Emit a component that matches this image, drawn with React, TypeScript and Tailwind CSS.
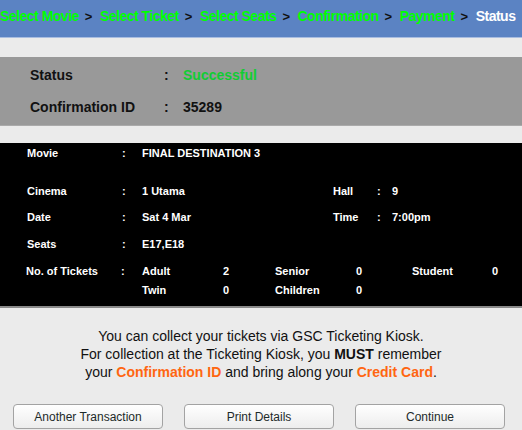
const steps = ['Select Movie', 'Select Ticket', 'Select Seats', 'Confirmation', 'Payment']

function Row({ label, value, extra }: { label: string; value: React.ReactNode; extra?: [string, string] }) {
  return (
    <div className="flex leading-[14px]">
      <span className="w-[95px] pl-[27px] box-content">{label}</span>
      <span className="w-[20px]">:</span>
      <span className="w-[191px]">{value}</span>
      {extra && (
        <>
          <span className="w-[44px]">{extra[0]}</span>
          <span className="w-[15px]">:</span>
          <span>{extra[1]}</span>
        </>
      )}
    </div>
  )
}

export default function App() {
  return (
    <div className="w-[522px] h-[430px] overflow-hidden bg-[#ebebeb] font-['Liberation_Sans',Arial,sans-serif]">
      <div className="h-[38px] bg-[#5b83c3] border-b border-[#a9bde0] flex items-start pt-[6px] text-[14px] font-bold tracking-[-0.5px] whitespace-nowrap">
        {steps.map((s) => (
          <span key={s} className="flex items-center">
            <span className="text-[#00ff00]">{s}</span>
            <span className="text-[#111] ml-[6px] mr-[8px] text-[13px]">&gt;</span>
          </span>
        ))}
        <span className="text-white">Status</span>
      </div>

      <div className="mt-[19px] bg-[#999999] border-b border-[#aaaaaa] pt-[10px] pb-[10px] text-[14px] font-bold leading-[16px] text-[#111]">
        <div className="flex">
          <span className="w-[134px] pl-[30px] box-content">Status</span>
          <span className="w-[19px]">:</span>
          <span className="text-[#11cc33]">Successful</span>
        </div>
        <div className="flex mt-[16px]">
          <span className="w-[134px] pl-[30px] box-content">Confirmation ID</span>
          <span className="w-[19px]">:</span>
          <span>35289</span>
        </div>
      </div>

      <div className="mt-[17px] bg-black border-b-2 border-[#8a8a8a] text-white text-[11px] font-bold pt-[3px] pb-[9px]">
        <Row label="Movie" value="FINAL DESTINATION 3" />
        <div className="mt-[24px]">
          <Row label="Cinema" value="1 Utama" extra={['Hall', '9']} />
        </div>
        <div className="mt-[12px]">
          <Row label="Date" value="Sat 4 Mar" extra={['Time', '7:00pm']} />
        </div>
        <div className="mt-[13px]">
          <Row label="Seats" value="E17,E18" />
        </div>
        <div className="mt-[13px] flex leading-[14px]">
          <span className="w-[95px] pl-[26px] box-content">No. of Tickets</span>
          <span className="w-[21px]">:</span>
          <div className="grid grid-cols-[81px_52px_81px_56px_80px_auto] gap-y-[5px]">
            <span>Adult</span>
            <span>2</span>
            <span>Senior</span>
            <span>0</span>
            <span>Student</span>
            <span>0</span>
            <span>Twin</span>
            <span>0</span>
            <span>Children</span>
            <span>0</span>
          </div>
        </div>
      </div>

      <div className="mt-[19px] text-center text-[14px] leading-[18px] text-[#111]">
        <p>You can collect your tickets via GSC Ticketing Kiosk.</p>
        <p>
          For collection at the Ticketing Kiosk, you <b>MUST</b> remember
        </p>
        <p>
          your <b className="text-[#ff6611]">Confirmation ID</b> and bring along your{' '}
          <b className="text-[#ff6611]">Credit Card</b>.
        </p>
      </div>

      <div className="mt-[23px] flex gap-[21px] pl-[13px]">
        {['Another Transaction', 'Print Details', 'Continue'].map((t) => (
          <button
            key={t}
            className="w-[150px] h-[25px] rounded-[4px] border border-[#a3a3a3] bg-gradient-to-b from-[#ffffff] to-[#ededed] text-[12px] text-[#1d2a2a] font-['Liberation_Sans',Arial,sans-serif]"
          >
            {t}
          </button>
        ))}
      </div>
    </div>
  )
}
